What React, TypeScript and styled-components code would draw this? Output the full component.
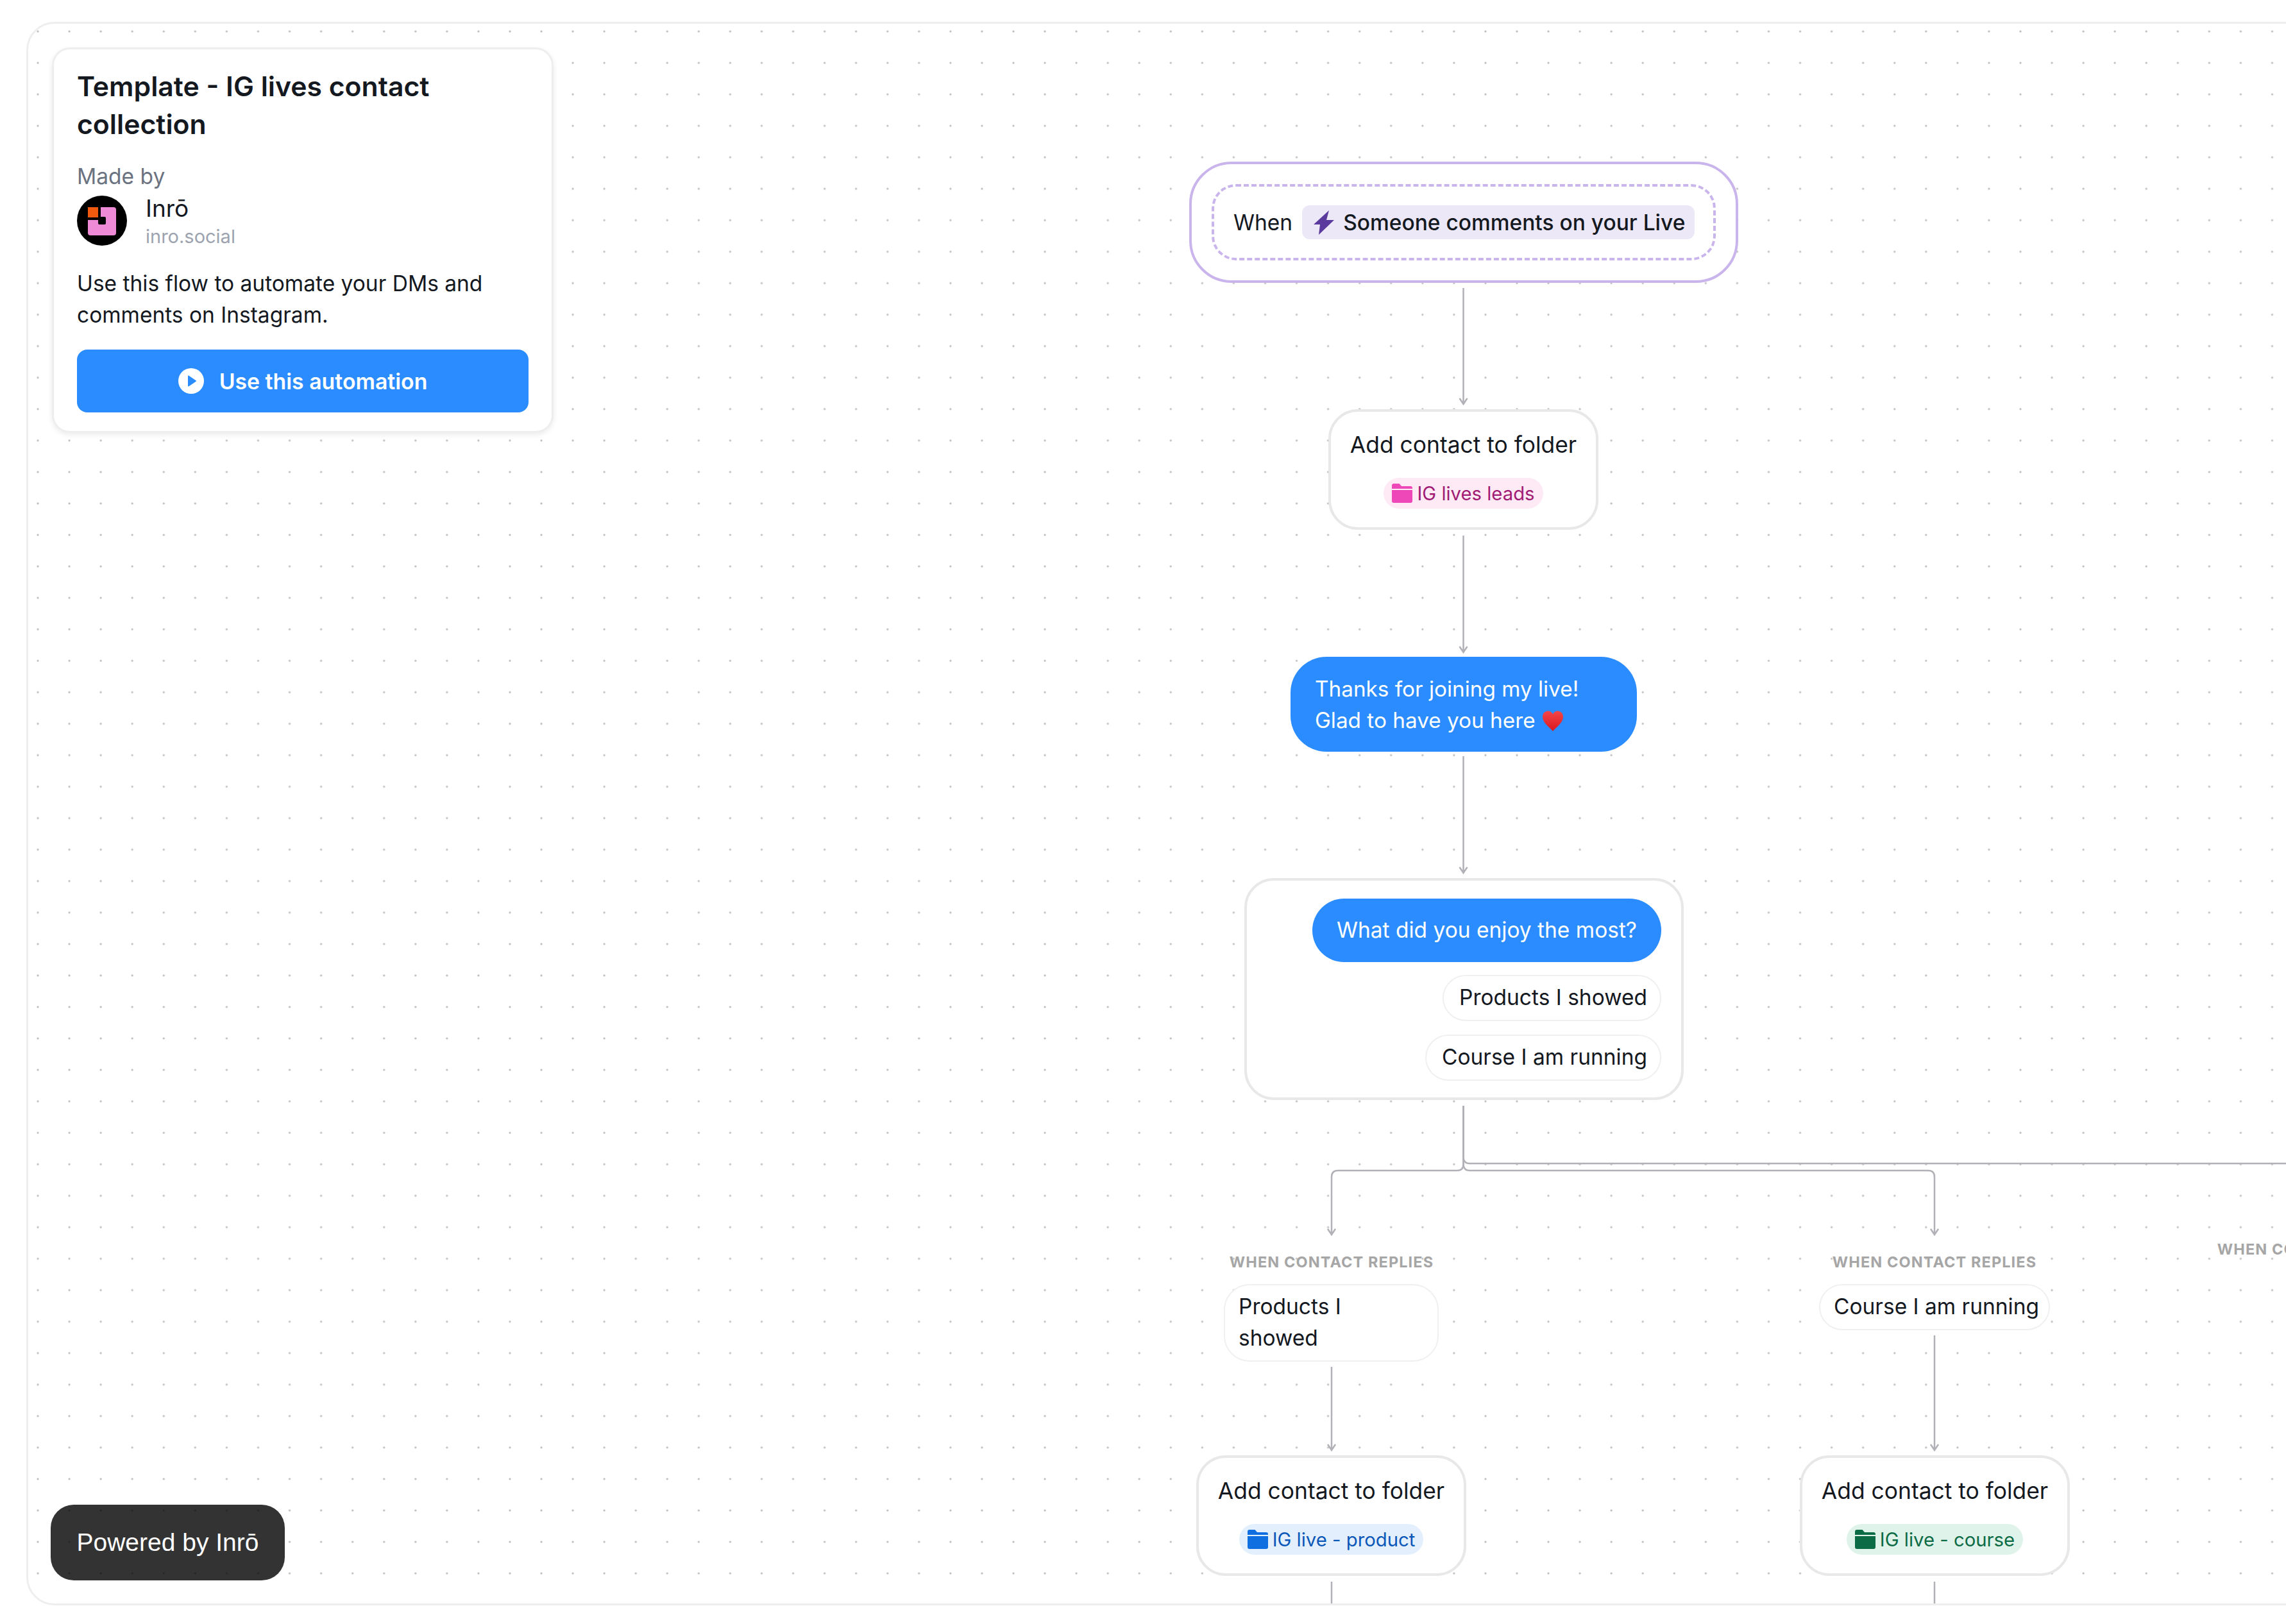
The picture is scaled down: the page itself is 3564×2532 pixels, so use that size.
import React from 'react';
import styled, { createGlobalStyle } from 'styled-components';

const GlobalStyle = createGlobalStyle`
  html, body {
    margin: 0;
    padding: 0;
    background: #fff;
  }
  body {
    font-family: Inter, "Liberation Sans", sans-serif;
    color: #14181f;
    -webkit-font-smoothing: antialiased;
  }
`;

const Page = styled.div`
  width: 3564px;
  height: 2532px;
  box-sizing: border-box;
  padding: 34px 0 29px 41px;
  overflow: hidden;
`;

const Canvas = styled.main`
  position: relative;
  box-sizing: border-box;
  width: calc(100% + 60px);
  height: 100%;
  border: 3px solid #eeeeee;
  border-radius: 44px;
  overflow: hidden;
  background-color: #fff;
  background-image: radial-gradient(circle, #bdbdbd 1.2px, transparent 1.9px);
  background-size: 49.07px 49.07px;
  background-position: -9.5px -12.5px;
`;

/* origin of the diagram, lined up with the page corner */
const Plane = styled.div`
  position: absolute;
  left: -44px;
  top: -37px;
  width: 3564px;
  height: 2532px;
`;

const Wires = styled.svg`
  position: absolute;
  left: 0;
  top: 0;
  fill: none;
  stroke: #b1b1b7;
  stroke-width: 2.5;
`;

const Place = styled.div<{ $x: number; $y: number; $w: number }>`
  position: absolute;
  left: ${(p) => p.$x}px;
  top: ${(p) => p.$y}px;
  width: ${(p) => p.$w}px;
`;

const InfoCard = styled.aside`
  box-sizing: border-box;
  padding: 28px 36px 29px;
  background: #fff;
  border: 3px solid #eeeeee;
  border-radius: 28px;
  box-shadow: 0 3px 8px rgba(0, 0, 0, 0.08);
`;

const Title = styled.h1`
  margin: 0 0 28px;
  font-size: 42.7px;
  line-height: 59px;
  font-weight: 600;
  color: #14181f;
`;

const MadeBy = styled.div`
  font-size: 33.5px;
  line-height: 49px;
  color: #6b7280;
`;

const Author = styled.div`
  display: flex;
  gap: 29px;
  height: 78px;
  margin-top: 5px;
`;

const AuthorText = styled.div`
  display: flex;
  flex-direction: column;
  gap: 6px;
`;

const AuthorName = styled.div`
  font-size: 37px;
  line-height: 40px;
`;

const AuthorSite = styled.div`
  font-size: 29px;
  line-height: 36px;
  color: #9ca3af;
`;

const Description = styled.p`
  margin: 35px 0 29px;
  font-size: 33.5px;
  line-height: 49px;
  color: #14181f;
`;

const PrimaryButton = styled.button`
  display: flex;
  align-items: center;
  justify-content: center;
  gap: 24px;
  width: 100%;
  height: 98px;
  border: 0;
  border-radius: 16px;
  background: #2b8cff;
  color: #fff;
  font-family: inherit;
  font-size: 33.8px;
  font-weight: 600;
`;

const PoweredBadge = styled.div`
  display: flex;
  align-items: center;
  justify-content: center;
  width: 365px;
  height: 118px;
  border-radius: 36px;
  background: rgba(0, 0, 0, 0.8);
  color: #fff;
  font-family: "Liberation Sans", Arial, sans-serif;
  font-size: 39px;
`;

const TriggerCard = styled.div`
  box-sizing: border-box;
  padding: 31px;
  background: #fff;
  border: 4px solid #c9b5ec;
  border-radius: 66px;
`;

const TriggerInner = styled.div`
  display: flex;
  align-items: center;
  gap: 15px;
  box-sizing: border-box;
  height: 119px;
  padding: 0 30px;
  border: 4.5px dashed #c9b5ec;
  border-radius: 38px;
  font-size: 33.5px;
`;

const TriggerChip = styled.div`
  display: flex;
  align-items: center;
  gap: 14px;
  height: 53px;
  padding: 0 15px 0 18px;
  border-radius: 12px;
  background: #ece8f7;
  font-weight: 500;
  white-space: nowrap;
`;

const StepCard = styled.div`
  display: flex;
  flex-direction: column;
  align-items: center;
  box-sizing: border-box;
  padding: 27px 0 29px;
  background: #fff;
  border: 4px solid #e8e8e8;
  border-radius: 46px;
`;

const StepTitle = styled.div`
  font-size: 35.4px;
  line-height: 49px;
  white-space: nowrap;
`;

const FolderChip = styled.div<{ $bg: string; $fg: string }>`
  display: flex;
  align-items: center;
  gap: 7px;
  height: 48px;
  margin-top: 27px;
  padding: 0 13px;
  border-radius: 24px;
  background: ${(p) => p.$bg};
  color: ${(p) => p.$fg};
  font-size: 29.3px;
  white-space: nowrap;
`;

const MessageBubble = styled.div`
  box-sizing: border-box;
  padding: 26px 38px 24px;
  background: #2b8cff;
  color: #fff;
  border-radius: 56px;
  font-size: 33.3px;
  line-height: 49px;
`;

const HeartLine = styled.span`
  display: inline-flex;
  align-items: center;
  gap: 10px;
`;

const QuestionCard = styled.div`
  display: flex;
  flex-direction: column;
  align-items: flex-end;
  box-sizing: border-box;
  height: 346px;
  padding: 28px 31px 0;
  background: #fff;
  border: 4px solid #e8e8e8;
  border-radius: 46px;
`;

const QuestionBubble = styled.div`
  margin-bottom: 20px;
  padding: 25px 38px;
  background: #2b8cff;
  color: #fff;
  border-radius: 50px;
  font-size: 33.5px;
  line-height: 49px;
  white-space: nowrap;
`;

const ReplyPill = styled.div<{ $block?: boolean }>`
  box-sizing: border-box;
  padding: ${(p) => (p.$block ? '9px 16px 10px 21px' : '9px 20px 10px 24px')};
  margin-bottom: 21px;
  background: #fff;
  border: 2.5px solid #f0f0f0;
  border-radius: 40px;
  font-size: 33.5px;
  line-height: 49px;
  white-space: nowrap;
  ${(p) => p.$block && 'width: 100%;'}
`;

const BranchLabel = styled.div`
  font-size: 23.5px;
  line-height: 30px;
  font-weight: 700;
  letter-spacing: 1.1px;
  color: #a6a6a6;
  text-align: center;
  white-space: nowrap;
`;

const FolderIcon = ({ color }: { color: string }) => (
  <svg width="32" height="30" viewBox="0 0 32 30">
    <path fill={color} d="M0 3a3 3 0 0 1 3-3h8.500l3.500 4h14a3 3 0 0 1 3 3v1H0z" />
    <path fill={color} d="M0 10h32v17a3 3 0 0 1-3 3H3a3 3 0 0 1-3-3z" />
  </svg>
);

const Logo = () => (
  <svg width="78" height="78" viewBox="0 0 78 78" style={{ flex: 'none' }}>
    <circle cx="39" cy="39" r="39" fill="#000" />
    <rect x="17" y="18" width="44" height="44" rx="4" fill="#ee8ad6" />
    <rect x="13" y="14" width="24" height="24" fill="#000" />
    <rect x="33" y="33" width="12" height="12" rx="2" fill="#000" />
    <rect x="17" y="18" width="16" height="16" fill="#f05a0e" />
  </svg>
);

const PlayIcon = () => (
  <svg width="40" height="40" viewBox="0 0 40 40">
    <circle cx="20" cy="20" r="20" fill="#fff" />
    <path d="M15 12.500a1 1 0 0 1 1.500-.8l11 7.500a1 1 0 0 1 0 1.600l-11 7.500a1 1 0 0 1-1.500-.8z" fill="#2b8cff" />
  </svg>
);

const BoltIcon = () => (
  <svg width="32" height="38" viewBox="0 0 32 38">
    <path d="M24 0 0 22H10L8 38 32 15H20z" fill="#5b3a9e" />
  </svg>
);

const HeartIcon = () => (
  <svg width="34" height="34" viewBox="0 0 34 34">
    <defs>
      <linearGradient id="heartFill" x1="0" y1="0" x2="0" y2="1">
        <stop offset="0" stopColor="#f4474a" />
        <stop offset="1" stopColor="#d9161f" />
      </linearGradient>
    </defs>
    <path
      d="M17 33C12 27 1 20 1 10.500C1 5 5 1.500 9.500 1.500 13 1.500 15.500 3.500 17 6.500 18.500 3.500 21 1.500 24.500 1.500 29 1.500 33 5 33 10.500 33 20 22 27 17 33z"
      fill="url(#heartFill)"
    />
  </svg>
);

const Arrow = ({ x, y1, y2 }: { x: number; y1: number; y2: number }) => (
  <path d={`M${x} ${y1}V${y2}M${x - 6} ${y2 - 9}L${x} ${y2}L${x + 6} ${y2 - 9}`} />
);

const AddToFolder = ({ label, bg, fg, icon }: { label: string; bg: string; fg: string; icon: string }) => (
  <StepCard>
    <StepTitle>Add contact to folder</StepTitle>
    <FolderChip $bg={bg} $fg={fg}>
      <FolderIcon color={icon} />
      {label}
    </FolderChip>
  </StepCard>
);

export default function App() {
  return (
    <Page>
      <GlobalStyle />
      <Canvas>
        <Plane>
          <Wires width="3564" height="2532">
            <Arrow x={2281.5} y1={449} y2={630} />
            <Arrow x={2281.5} y1={835} y2={1017} />
            <Arrow x={2281.5} y1={1179} y2={1361} />
            <path d="M2281.5 1724V1815q0 10-10 10H2086q-10 0-10 10V1925M2070 1916l6 9 6-9" />
            <path d="M2281.5 1724V1815q0 10 10 10H3006q10 0 10 10V1925M3010 1916l6 9 6-9" />
            <path d="M2281.5 1724V1804q0 10 10 10H3600" />
            <Arrow x={2076} y1={2131} y2={2261} />
            <Arrow x={3016} y1={2082} y2={2261} />
            <path d="M2076 2466V2510M3016 2466V2510" />
          </Wires>

          <Place $x={81} $y={74} $w={782}>
            <InfoCard>
              <Title>Template - IG lives contact collection</Title>
              <MadeBy>Made by</MadeBy>
              <Author>
                <Logo />
                <AuthorText>
                  <AuthorName>Inrō</AuthorName>
                  <AuthorSite>inro.social</AuthorSite>
                </AuthorText>
              </Author>
              <Description>Use this flow to automate your DMs and comments on Instagram.</Description>
              <PrimaryButton>
                <PlayIcon />
                Use this automation
              </PrimaryButton>
            </InfoCard>
          </Place>

          <Place $x={79} $y={2346} $w={365}>
            <PoweredBadge>Powered by Inrō</PoweredBadge>
          </Place>

          <Place $x={1854} $y={252} $w={856}>
            <TriggerCard>
              <TriggerInner>
                When
                <TriggerChip>
                  <BoltIcon />
                  Someone comments on your Live
                </TriggerChip>
              </TriggerInner>
            </TriggerCard>
          </Place>

          <Place $x={2071} $y={638} $w={421}>
            <AddToFolder label="IG lives leads" bg="#fdeaf5" fg="#a01a74" icon="#ee48b8" />
          </Place>

          <Place $x={2012} $y={1024} $w={540}>
            <MessageBubble>
              Thanks for joining my live!
              <br />
              <HeartLine>
                Glad to have you here
                <HeartIcon />
              </HeartLine>
            </MessageBubble>
          </Place>

          <Place $x={1940} $y={1369} $w={685}>
            <QuestionCard>
              <QuestionBubble>What did you enjoy the most?</QuestionBubble>
              <ReplyPill>Products I showed</ReplyPill>
              <ReplyPill>Course I am running</ReplyPill>
            </QuestionCard>
          </Place>

          <Place $x={1876} $y={1953} $w={400}>
            <BranchLabel>WHEN CONTACT REPLIES</BranchLabel>
          </Place>
          <Place $x={2816} $y={1953} $w={400}>
            <BranchLabel>WHEN CONTACT REPLIES</BranchLabel>
          </Place>
          <Place $x={3456} $y={1933} $w={320}>
            <BranchLabel>WHEN CONTACT REPLIES</BranchLabel>
          </Place>

          <Place $x={1908} $y={2002} $w={335}>
            <ReplyPill $block>
              Products I
              <br />
              showed
            </ReplyPill>
          </Place>
          <Place $x={2836} $y={2002} $w={360}>
            <ReplyPill $block>Course I am running</ReplyPill>
          </Place>

          <Place $x={1865} $y={2269} $w={421}>
            <AddToFolder label="IG live - product" bg="#e3effd" fg="#0a57b8" icon="#0f6fe0" />
          </Place>
          <Place $x={2806} $y={2269} $w={421}>
            <AddToFolder label="IG live - course" bg="#dff3ea" fg="#0b6b45" icon="#0b6b45" />
          </Place>
        </Plane>
      </Canvas>
    </Page>
  );
}
